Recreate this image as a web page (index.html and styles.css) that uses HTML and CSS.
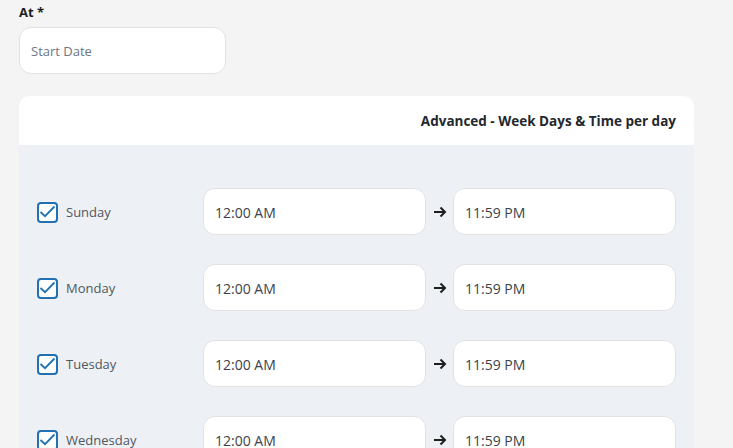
FILE: index.html
```html
<!DOCTYPE html>
<html lang="en">
<head>
<meta charset="utf-8">
<title>Schedule</title>
<link rel="stylesheet" href="styles.css">
</head>
<body>
<div class="page">
  <label class="field-label">At *</label>
  <div class="date-input">Start Date</div>

  <section class="card">
    <header class="card-header">Advanced - Week Days &amp; Time per day</header>
    <div class="card-body">
      <div class="day-row">
        <label class="day"><span class="check"><svg viewBox="0 0 17 17"><path d="M1.5 8 L6 12.2 L15.5 2.5" fill="none" stroke="#2271b1" stroke-width="1.8"/></svg></span>Sunday</label>
        <div class="time">12:00 AM</div>
        <span class="arrow"><svg viewBox="0 0 14 12" width="14" height="12"><path d="M1 6 H12 M7.5 1.5 L12 6 L7.5 10.5" fill="none" stroke="#1e1e1e" stroke-width="2"/></svg></span>
        <div class="time">11:59 PM</div>
      </div>
      <div class="day-row">
        <label class="day"><span class="check"><svg viewBox="0 0 17 17"><path d="M1.5 8 L6 12.2 L15.5 2.5" fill="none" stroke="#2271b1" stroke-width="1.8"/></svg></span>Monday</label>
        <div class="time">12:00 AM</div>
        <span class="arrow"><svg viewBox="0 0 14 12" width="14" height="12"><path d="M1 6 H12 M7.5 1.5 L12 6 L7.5 10.5" fill="none" stroke="#1e1e1e" stroke-width="2"/></svg></span>
        <div class="time">11:59 PM</div>
      </div>
      <div class="day-row">
        <label class="day"><span class="check"><svg viewBox="0 0 17 17"><path d="M1.5 8 L6 12.2 L15.5 2.5" fill="none" stroke="#2271b1" stroke-width="1.8"/></svg></span>Tuesday</label>
        <div class="time">12:00 AM</div>
        <span class="arrow"><svg viewBox="0 0 14 12" width="14" height="12"><path d="M1 6 H12 M7.5 1.5 L12 6 L7.5 10.5" fill="none" stroke="#1e1e1e" stroke-width="2"/></svg></span>
        <div class="time">11:59 PM</div>
      </div>
      <div class="day-row">
        <label class="day"><span class="check"><svg viewBox="0 0 17 17"><path d="M1.5 8 L6 12.2 L15.5 2.5" fill="none" stroke="#2271b1" stroke-width="1.8"/></svg></span>Wednesday</label>
        <div class="time">12:00 AM</div>
        <span class="arrow"><svg viewBox="0 0 14 12" width="14" height="12"><path d="M1 6 H12 M7.5 1.5 L12 6 L7.5 10.5" fill="none" stroke="#1e1e1e" stroke-width="2"/></svg></span>
        <div class="time">11:59 PM</div>
      </div>
    </div>
  </section>
</div>
</body>
</html>
```

FILE: styles.css
```css
html, body {
  margin: 0;
  padding: 0;
  background: #f4f4f4;
}
body {
  font-family: "Open Sans", "Noto Sans", sans-serif;
  color: #1e1e1e;
  overflow: hidden;
}
.page {
  padding: 3px 40px 0 19px;
}
.field-label {
  display: block;
  font-size: 13px;
  font-weight: 700;
  line-height: 18px;
  color: #1e1e1e;
}
.date-input {
  box-sizing: border-box;
  margin-top: 6px;
  width: 207px;
  height: 47px;
  background: #fff;
  border: 1px solid #e2e2e2;
  border-radius: 12px;
  padding: 0 11px;
  display: flex;
  align-items: center;
  font-size: 13px;
  color: #6c7781;
}
.card {
  margin-top: 22px;
  width: 675px;
  border-radius: 10px;
  overflow: hidden;
  background: #edf1f5;
}
.card-header {
  background: #fff;
  height: 49px;
  display: flex;
  align-items: center;
  justify-content: flex-end;
  padding: 0 18px;
  font-size: 13.5px;
  font-weight: 700;
  color: #23282d;
}
.card-body {
  padding: 43px 18px 20px 18px;
  display: flex;
  flex-direction: column;
  gap: 29px;
}
.day-row {
  display: grid;
  grid-template-columns: 166px 1fr 27px 1fr;
  align-items: center;
  height: 47px;
}
.day {
  display: flex;
  align-items: center;
  gap: 8px;
  font-size: 13px;
  color: #50575e;
  padding-top: 1px;
}
.check {
  box-sizing: border-box;
  width: 21px;
  height: 21px;
  border: 2px solid #2271b1;
  border-radius: 4px;
  background: #fff;
  display: flex;
  align-items: center;
  justify-content: center;
}
.check svg {
  display: block;
  width: 17px;
  height: 17px;
}
.time {
  box-sizing: border-box;
  height: 47px;
  background: #fff;
  border: 1px solid #e2e2e2;
  border-radius: 12px;
  padding: 1px 11px 0;
  display: flex;
  align-items: center;
  font-size: 14px;
  color: #3c434a;
}
.arrow {
  display: flex;
  justify-content: center;
  align-items: center;
  padding-top: 1px;
}
```
